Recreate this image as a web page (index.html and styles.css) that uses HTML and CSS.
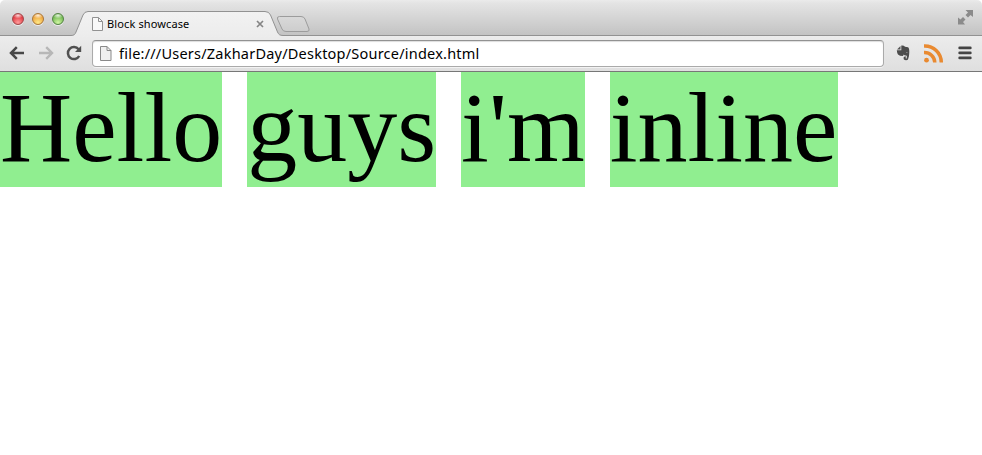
FILE: index.html
```html
<!DOCTYPE html>
<html lang="en">
<head>
<meta charset="utf-8">
<title>Block showcase</title>
<link rel="stylesheet" href="styles.css">
</head>
<body>
<header class="browser">
  <div class="tabstrip">
    <svg class="tab-shapes" width="982" height="37" viewBox="0 0 982 37">
      <defs>
        <linearGradient id="tabfill" x1="0" y1="0" x2="0" y2="1"><stop offset="0" stop-color="#f2f2f2"/><stop offset="1" stop-color="#ececec"/></linearGradient>
        <linearGradient id="newfill" x1="0" y1="0" x2="0" y2="1"><stop offset="0" stop-color="#d9d9d9"/><stop offset="1" stop-color="#cdcdcd"/></linearGradient>
      </defs>
      <path d="M0 37V35.5H71C74 35.5 75 34.5 76 32L83 15Q84.500 11.500 88 11.500H265Q269 11.500 270.500 15L277.500 32C278.500 34.500 280 35.500 283 35.500H982V37Z" fill="url(#tabfill)"/>
      <path d="M0 35.500H71C74 35.500 75 34.500 76 32L83 15Q84.500 11.500 88 11.500H265Q269 11.500 270.500 15L277.500 32C278.500 34.500 280 35.500 283 35.500H982" fill="none" stroke="#929292"/>
      <path d="M279.500 16.500H301Q304 16.500 305 19L309 29Q309.700 31.500 307 31.500H286Q283 31.500 282 29L277.500 19Q276.800 16.500 279.500 16.500Z" fill="url(#newfill)" stroke="#9c9c9c"/>
    </svg>
    <div class="lights"><i class="light red"></i><i class="light amber"></i><i class="light green"></i></div>
    <div class="tab">
      <svg class="tab-page" width="12" height="14" viewBox="0 0 12 14"><path d="M.5.500H6.500L10.500 4.500V13.500H.5Z" fill="#f8f8f8" stroke="#929292"/><path d="M6.500.500V4.500H10.500" fill="none" stroke="#929292"/></svg>
      <span class="tab-title">Block showcase</span>
      <svg class="close" width="8" height="8" viewBox="0 0 8 8"><path d="M1 1L7 7M7 1L1 7" stroke="#858585" stroke-width="1.700"/></svg>
    </div>
    <svg class="fullscreen" width="15" height="15" viewBox="0 0 15 15"><path d="M7.500 0H15V7L12.500 5L10 7.500L7.500 5L10 2.500ZM0 7.500L2.500 9.500L5 7L7.500 9.500L5 12L7 14.500H0Z" fill="#8b8b8b"/></svg>
  </div>
  <div class="toolbar">
    <svg class="back" width="16" height="14" viewBox="0 0 16 14"><path d="M7.800 1.200L2 7L7.800 12.800M2.500 7H15" fill="none" stroke="#484848" stroke-width="2.500"/></svg>
    <svg class="forward" width="16" height="14" viewBox="0 0 16 14"><path d="M8.200 1.200L14 7L8.200 12.800M13.500 7H1" fill="none" stroke="#b7b7b7" stroke-width="2.400"/></svg>
    <svg class="reload" width="16" height="16" viewBox="0 0 16 16"><path d="M12.600 4.300A6 6 0 1 0 13.200 11" fill="none" stroke="#505050" stroke-width="2.500"/><path d="M15.200.800V7H9Z" fill="#505050"/></svg>
    <div class="address">
      <svg class="page" width="12" height="15" viewBox="0 0 12 15"><path d="M.5.500H7L11 4.500V14.500H.5Z" fill="#efefef" stroke="#898989"/><path d="M7 .500V4.500H11" fill="none" stroke="#898989"/></svg>
      <span class="url">file:///Users/ZakharDay/Desktop/Source/index.html</span>
    </div>
    <svg class="elephant" width="14" height="16" viewBox="0 0 14 16"><path d="M4.500 1L1 4.500H4.500Z" fill="#555"/><path d="M5.300.500Q8 .200 9 1.700L12 2.300Q13.300 2.800 13.300 7Q13.300 12 12 14.500Q11 15.600 8.800 15.100Q7.200 14.600 7.600 12.500Q8 11 10 11.500L10.800 12.300H9.700Q9 13.700 10.700 13.500Q11.500 12 10.800 10.800L8.500 10.300L7.700 9.500L7 11Q3.500 11 2 9.500Q1 8 .800 5.300H5.300Z" fill="#4c4c4c"/><path d="M9.800 7.400Q11 6.400 11.900 7.600Z" fill="#ddd"/></svg>
    <svg class="rss" width="20" height="19" viewBox="0 0 20 19"><g fill="none" stroke="#e98a31" stroke-width="3.500"><path d="M0 2A16.500 16.500 0 0 1 17.300 18.500"/><path d="M0 8.500A10.300 10.300 0 0 1 10.800 18.500"/></g><circle cx="2.500" cy="16.200" r="2.400" fill="#e98a31"/></svg>
    <svg class="menu" width="14" height="14" viewBox="0 0 14 14"><path d="M1.700 1.900H12.300M1.700 6.900H12.300M1.700 11.900H12.300" stroke="#444" stroke-width="2.800" stroke-linecap="round"/></svg>
  </div>
</header>
<main class="words"><span>Hello</span> <span>guys</span> <span>i'm</span> <span>inline</span></main>
</body>
</html>
```
FILE: styles.css
```css
* { box-sizing: border-box; }
body { margin: 0; background: #fff; color: #000; overflow: hidden; }
svg { display: block; flex: none; }
.browser { height: 72px; border-radius: 5px 5px 0 0; overflow: hidden; font-family: "Noto Sans", "Open Sans", sans-serif; }
.tabstrip { position: relative; display: flex; height: 36px; background: linear-gradient(#ebebeb 0, #e4e4e4 3px, #c2c2c2 36px); }
.tab-shapes { position: absolute; left: 0; top: 0; }
.lights { position: relative; display: flex; gap: 8px; padding: 13px 0 0 12px; width: 92px; }
.light { width: 12px; height: 12px; border-radius: 50%; border: 1px solid; box-shadow: 0 1px 0 #eee; }
.red { border-color: #a0474a; background: radial-gradient(ellipse 5px 3px at 50% 15%, #fffc, transparent), radial-gradient(circle at 50% 85%, #ff9c9c, #e23c43 65%); }
.amber { border-color: #a97639; background: radial-gradient(ellipse 5px 3px at 50% 15%, #fffc, transparent), radial-gradient(circle at 50% 85%, #ffe987, #efa841 65%); }
.green { border-color: #548344; background: radial-gradient(ellipse 5px 3px at 50% 15%, #fffc, transparent), radial-gradient(circle at 50% 85%, #d0f6a2, #76bb56 65%); }
.tab { position: relative; display: flex; width: 172px; height: 25px; margin-top: 11px; }
.tab-page { margin-top: 6px; }
.tab-title { margin-left: 3px; font-size: 11px; line-height: 25px; white-space: nowrap; letter-spacing: .12px; }
.close { margin: 9px 0 0 auto; }
.fullscreen { position: relative; margin: 10px 9px 0 auto; }
.toolbar { display: flex; align-items: center; height: 36px; padding: 0 10px 1px 9px; background: linear-gradient(#ececec, #dfdfdf); border-bottom: 1px solid #777; }
.forward { margin-left: 13px; }
.reload { margin-left: 12px; }
.address { display: flex; align-items: center; width: 792px; height: 27px; margin-left: 10px; padding-left: 7px; background: #fff; border: 1px solid #aaa; border-top-color: #929292; border-radius: 4px; box-shadow: inset 0 1px 1px #ddd, 0 1px 0 #f3f3f3; }
.url { margin-left: 7px; font-size: 14.5px; line-height: 20px; white-space: nowrap; letter-spacing: .22px; }
.elephant { margin-left: 12px; }
.rss { margin-left: 14px; }
.menu { margin-left: 14px; }
.words { display: flex; gap: 25px; height: 115px; font: 100px/112px "Liberation Serif", "Times New Roman", serif; white-space: nowrap; }
.words span { height: 115px; background: #90ee90; }
.words span:last-child { padding-right: 1px; }
```
